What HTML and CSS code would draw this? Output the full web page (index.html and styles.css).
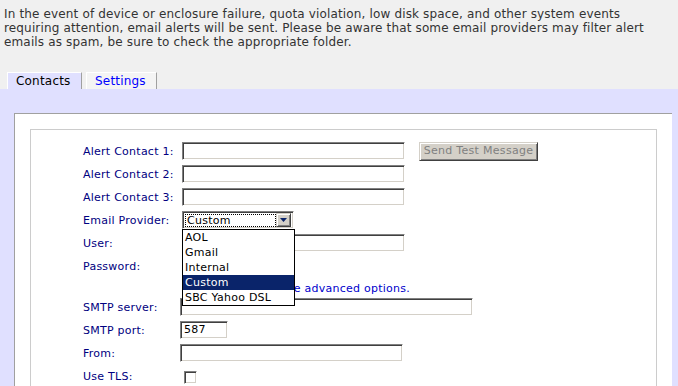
FILE: index.html
```html
<!DOCTYPE html>
<html>
<head>
<meta charset="utf-8">
<link rel="stylesheet" href="styles.css">
</head>
<body>
<p class="intro">In the event of device or enclosure failure, quota violation, low disk space, and other system events requiring attention, email alerts will be sent. Please be aware that some email providers may filter alert emails as spam, be sure to check the appropriate folder.</p>
<div class="tabs">
  <div class="tab active">Contacts</div>
  <div class="tab link">Settings</div>
</div>
<div class="panel">
  <div class="box">
    <div class="inner">
      <div class="form">
        <div class="label">Alert Contact 1:</div>
        <div class="ctl"><span class="input w222"></span><span class="btn">Send Test Message</span></div>
        <div class="label">Alert Contact 2:</div>
        <div class="ctl"><span class="input w222"></span></div>
        <div class="label">Alert Contact 3:</div>
        <div class="ctl"><span class="input w222"></span></div>
        <div class="label">Email Provider:</div>
        <div class="ctl">
          <div class="select">
            <div class="sel-val"><span class="focus">Custom</span></div>
            <div class="sel-btn"><svg width="7" height="4" viewBox="0 0 7 4"><path d="M0 0h7L3.5 4z" fill="#0a246a"/></svg></div>
            <ul class="dropdown">
              <li>AOL</li>
              <li>Gmail</li>
              <li>Internal</li>
              <li class="hl">Custom</li>
              <li>SBC Yahoo DSL</li>
            </ul>
          </div>
        </div>
        <div class="label">User:</div>
        <div class="ctl"><span class="input w222"></span></div>
        <div class="label">Password:</div>
        <div class="ctl"></div>
        <div class="label"></div>
        <div class="ctl"><span class="adv">Click here to use the advanced options.</span></div>
        <div class="label">SMTP server:</div>
        <div class="ctl left"><span class="input w293"></span></div>
        <div class="label">SMTP port:</div>
        <div class="ctl left"><span class="input w48 val">587</span></div>
        <div class="label">From:</div>
        <div class="ctl left"><span class="input w222"></span></div>
        <div class="label">Use TLS:</div>
        <div class="ctl left"><span class="check"></span></div>
      </div>
    </div>
  </div>
</div>
</body>
</html>
```

FILE: styles.css
```css
html, body {
  margin: 0;
  padding: 0;
  height: 100%;
  overflow: hidden;
}
body {
  background: #f0f0f0;
  font-family: "DejaVu Sans", Verdana, sans-serif;
  font-size: 11px;
  letter-spacing: 0.25px;
  color: #222;
}
.intro {
  margin: 0;
  padding: 7px 4px 0 4px;
  line-height: 14px;
  font-size: 12px;
  letter-spacing: 0.15px;
  width: 650px;
  color: #333;
}
.tabs {
  display: flex;
  gap: 4px;
  padding: 23px 0 0 7px;
}
.tab {
  height: 16px;
  line-height: 16px;
  font-size: 12px;
  letter-spacing: 0.2px;
  padding: 0 8px;
  border-top: 1px solid #fff;
  border-left: 1px solid #fff;
  border-right: 1px solid #a0a0a0;
}
.tab.active {
  background: #e0e0ff;
  color: #000;
  width: 57px;
}
.tab.link {
  background: #f4f4f4;
  color: #0000ff;
  width: 53px;
}
.panel {
  background: #e0e0ff;
  padding: 24px 6px 0 14px;
  height: 400px;
}
.box {
  background: #fff;
  border-top: 1px solid #a0a0a0;
  border-left: 1px solid #a0a0a0;
  padding: 15px 15px 0 15px;
  height: 400px;
}
.inner {
  border: 1px solid #cccccc;
  padding: 12px 0 0 52px;
  height: 400px;
}
.form {
  display: grid;
  grid-template-columns: 99px 1fr;
  grid-template-rows: repeat(6, 18px) 13px repeat(4, 18px);
  row-gap: 5px;
}
.label {
  color: #000080;
  line-height: 18px;
  padding-top: 1px;
}
.ctl {
  display: flex;
  align-items: flex-start;
  gap: 14px;
}
.ctl.left {
  margin-left: -2px;
}
.input {
  display: block;
  box-sizing: border-box;
  height: 18px;
  background: #fff;
  border: 1px solid;
  border-color: #808080 #fff #fff #808080;
  box-shadow: inset 1px 1px 0 #404040, inset -1px -1px 0 #d4d0c8;
}
.w222 { width: 223px; }
.w293 { width: 293px; }
.w48 { width: 48px; }
.val {
  color: #000;
  line-height: 16px;
  padding-left: 3px;
}
.btn {
  display: block;
  box-sizing: border-box;
  width: 119px;
  height: 19px;
  line-height: 16px;
  text-align: center;
  letter-spacing: 0.3px;
  background: #d4d0c8;
  color: #808080;
  border: 1px solid;
  border-color: #d4d0c8 #404040 #404040 #d4d0c8;
  box-shadow: inset 1px 1px 0 #fff, inset -1px -1px 0 #808080;
}
.select {
  position: relative;
  box-sizing: border-box;
  width: 112px;
  height: 18px;
  display: flex;
  border: 1px solid;
  border-color: #808080 #fff #fff #808080;
  box-shadow: inset 1px 1px 0 #404040, inset -1px -1px 0 #d4d0c8;
  padding: 2px 2px 1px 2px;
}
.sel-val {
  flex: 1;
  display: flex;
  color: #000;
}
.focus {
  flex: 1;
  border: 1px dotted #000;
  line-height: 11px;
  padding-left: 1px;
  font-size: 11px;
}
.sel-btn {
  width: 15px;
  box-sizing: border-box;
  background: #d4d0c8;
  display: flex;
  align-items: center;
  justify-content: center;
  border: 1px solid;
  border-color: #d4d0c8 #404040 #404040 #d4d0c8;
  box-shadow: inset 1px 1px 0 #fff, inset -1px -1px 0 #808080;
  margin-top: -1px;
}
.dropdown {
  position: absolute;
  left: -1px;
  top: 17px;
  width: 111px;
  margin: 0;
  padding: 0;
  list-style: none;
  background: #fff;
  border: 1px solid #000;
  z-index: 2;
  color: #000;
}
.dropdown li {
  height: 15px;
  line-height: 15px;
  padding-left: 2px;
}
.dropdown li.hl {
  background: #0a246a;
  color: #fff;
}
.adv {
  color: #0000cc;
  line-height: 13px;
  margin-top: 2px;
  white-space: nowrap;
}
.check {
  display: block;
  box-sizing: border-box;
  width: 13px;
  height: 13px;
  margin: 4px 0 0 4px;
  background: #fff;
  border: 1px solid;
  border-color: #808080 #fff #fff #808080;
  box-shadow: inset 1px 1px 0 #404040, inset -1px -1px 0 #d4d0c8;
}
```
